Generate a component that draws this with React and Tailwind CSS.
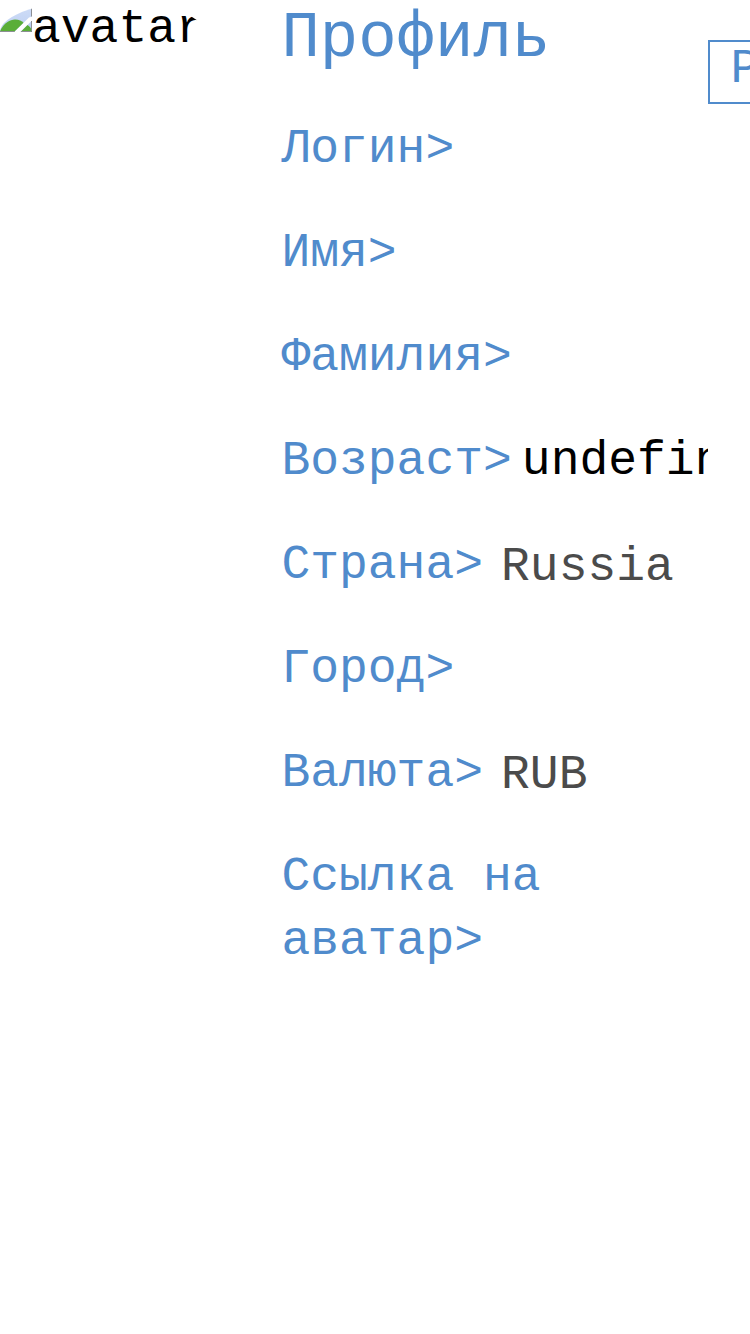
const rows = [
  { label: 'Логин' },
  { label: 'Имя' },
  { label: 'Фамилия' },
  { label: 'Возраст', typed: 'undefined' },
  { label: 'Страна', picked: 'Russia' },
  { label: 'Город' },
  { label: 'Валюта', picked: 'RUB' },
  { label: 'Ссылка на аватар' },
];

function BrokenImage() {
  return (
    <svg className="block h-8 w-8 shrink-0" viewBox="0 0 32 32" aria-hidden="true">
      <defs>
        <linearGradient id="sky" x1="0" y1="0" x2="0" y2="1">
          <stop offset="0" stopColor="#d3e0f8" />
          <stop offset="1" stopColor="#bdcff2" />
        </linearGradient>
      </defs>
      <path d="M0 0H32V16.500L29 17.500L14 32H0Z" fill="url(#sky)" />
      <path d="M0 31C4 23 10 19.500 15 19.500C19 19.500 22 21 23.500 22.800L14 32H0Z" fill="#5aae38" />
      <path d="M32 20.500V32H20.500Z" fill="#bdcff2" />
      <path d="M20.500 32L27.500 25C30 26.500 31 28.500 32 30V32Z" fill="#5aae38" />
      <path d="M31.500 0V16.500M31.500 21V31.500H21M14.500 31.500H0" fill="none" stroke="#8c8f94" />
    </svg>
  );
}

function Row({ label, typed, picked }) {
  return (
    <div className="flex">
      <span className="text-[#508bcc]">{label}&gt;</span>
      {typed && (
        <span className="ml-[10px] min-w-0 flex-1 overflow-hidden whitespace-nowrap text-black">{typed}</span>
      )}
      {picked && <span className="ml-[18px] pt-[2px] -mb-[2px] text-[#4b4b4b]">{picked}</span>}
    </div>
  );
}

export default function App() {
  return (
    <div className="flex h-[1334px] w-full items-start overflow-hidden bg-white font-['Liberation_Mono','Courier_New',monospace] text-[48px] leading-[64px] text-black">
      <div className="flex h-[64px] w-[203.5px] shrink-0 items-start overflow-hidden rounded-[50%]">
        <BrokenImage />
        <span className="-mt-[3px] whitespace-nowrap">avatar</span>
      </div>
      <main className="ml-[77.9px] flex w-[426.6px] shrink-0 flex-col">
        <h1 className="h-[117px] pt-[3px] text-[64px] leading-[73px] text-[#508bcc]">Профиль</h1>
        <div className="flex flex-col gap-10">
          {rows.map((row) => (
            <Row key={row.label} {...row} />
          ))}
        </div>
      </main>
      <button className="mt-10 flex h-16 w-24 shrink-0 items-start border-2 border-[#508bcc] pl-[20.5px] text-left leading-[54px] text-[#508bcc]">
        Р
      </button>
    </div>
  );
}
